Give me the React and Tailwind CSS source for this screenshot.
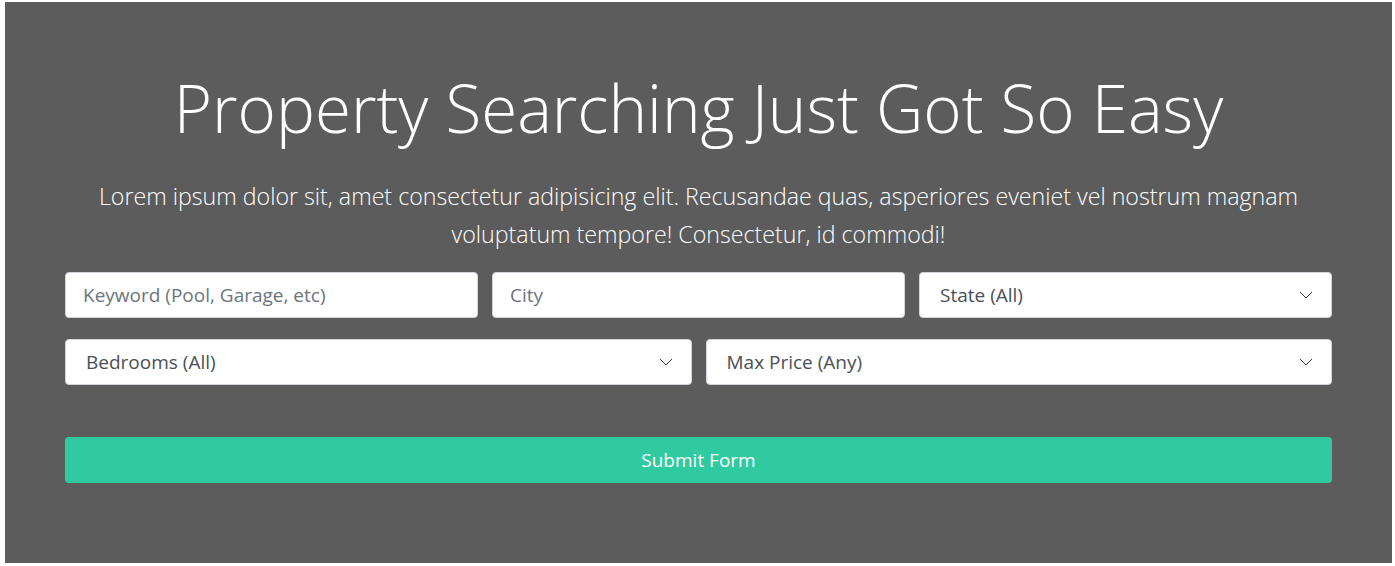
import React from 'react';

const Chevron = () => (
  <svg
    className="pointer-events-none absolute right-[19px] top-1/2 -translate-y-1/2"
    width="14"
    height="8"
    viewBox="0 0 14 8"
    fill="none"
  >
    <path d="M1 1l6 6 6-6" stroke="#343a40" strokeWidth="1" />
  </svg>
);

const SelectBox = ({ label, options }) => (
  <div className="relative">
    <select
      defaultValue=""
      className="h-[46px] w-full appearance-none rounded-[4px] border border-[#ced4da] bg-white pl-[20px] pr-10 text-[19px] text-[#495057] outline-none"
    >
      <option value="">{label}</option>
      {options.map((o) => (
        <option key={o} value={o}>
          {o}
        </option>
      ))}
    </select>
    <Chevron />
  </div>
);

const TextBox = ({ placeholder }) => (
  <input
    type="text"
    placeholder={placeholder}
    className="h-[46px] w-full rounded-[4px] border border-[#ced4da] bg-white px-[17px] text-[19px] text-[#495057] placeholder:text-[#6c757d] outline-none"
  />
);

export default function App() {
  return (
    <div className="min-h-screen bg-white font-['Open_Sans','Noto_Sans',sans-serif]">
      <section className="ml-[5px] mt-[2px] flex h-[561px] w-[1387px] flex-col bg-[#5c5c5c] px-[60px]">
        <h1 className="mt-[66px] text-center text-[65.5px] font-light leading-[80px] text-white">
          Property Searching Just Got So Easy
        </h1>
        <p className="mt-[29px] text-center text-[23.2px] font-light leading-[38px] text-white">
          Lorem ipsum dolor sit, amet consectetur adipisicing elit. Recusandae quas, asperiores
          eveniet vel nostrum magnam voluptatum tempore! Consectetur, id commodi!
        </p>

        <form className="mt-[19px] flex flex-col" onSubmit={(e) => e.preventDefault()}>
          <div className="grid grid-cols-3 gap-[14px]">
            <TextBox placeholder="Keyword (Pool, Garage, etc)" />
            <TextBox placeholder="City" />
            <SelectBox label="State (All)" options={['CA', 'NY', 'TX']} />
          </div>
          <div className="mt-[21px] grid grid-cols-2 gap-[14px]">
            <SelectBox label="Bedrooms (All)" options={['1', '2', '3', '4+']} />
            <SelectBox label="Max Price (Any)" options={['$100,000', '$250,000', '$500,000']} />
          </div>
          <button
            type="submit"
            className="mt-[52px] h-[46px] w-full rounded-[4px] bg-[#2fca9f] text-[19px] text-white"
          >
            Submit Form
          </button>
        </form>
      </section>
    </div>
  );
}
